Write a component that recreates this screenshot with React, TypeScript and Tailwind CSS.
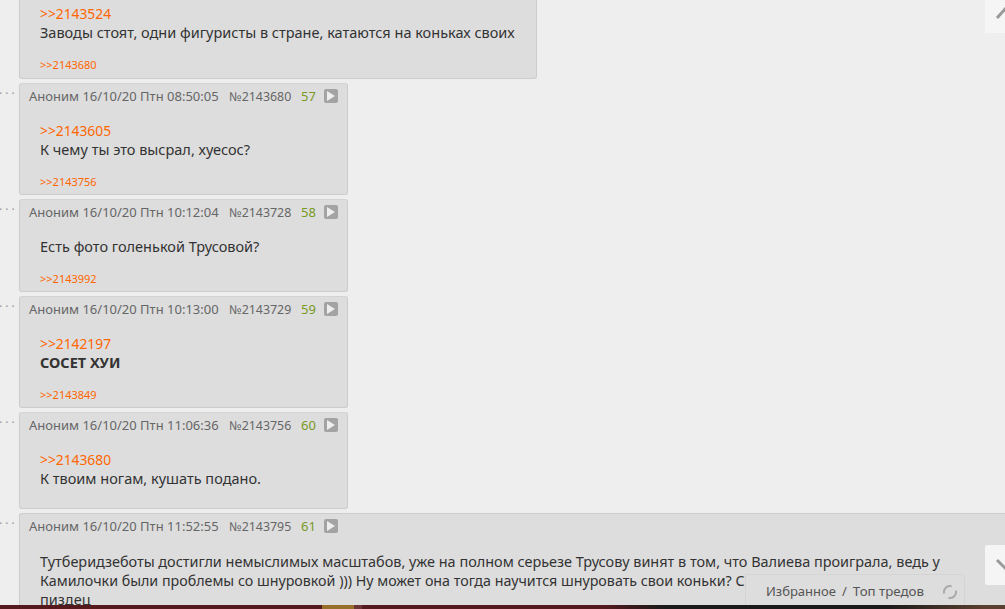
const posts = [
	{
		head: "",
		reply: ">>2143524",
		lines: ["Заводы стоят, одни фигуристы в стране, катаются на коньках своих"],
		backlink: ">>2143680",
		box: "w-[518px] h-[100px] -mt-[21px] pt-[12px]",
	},
	{
		head: "08:50:05",
		id: "2143680",
		n: "57",
		reply: ">>2143605",
		lines: ["К чему ты это высрал, хуесос?"],
		backlink: ">>2143756",
		box: "w-[329px] h-[112px]",
	},
	{
		head: "10:12:04",
		id: "2143728",
		n: "58",
		lines: ["Есть фото голенькой Трусовой?"],
		backlink: ">>2143992",
		box: "w-[329px] h-[93px]",
	},
	{
		head: "10:13:00",
		id: "2143729",
		n: "59",
		reply: ">>2142197",
		bold: true,
		lines: ["СОСЕТ ХУИ"],
		backlink: ">>2143849",
		box: "w-[329px] h-[112px]",
	},
	{
		head: "11:06:36",
		id: "2143756",
		n: "60",
		reply: ">>2143680",
		lines: ["К твоим ногам, кушать подано."],
		box: "w-[329px] h-[97px]",
	},
];

function PostHead({ time, id, n }: { time: string; id: string; n: string }) {
	return (
		<div className="flex items-center h-[24px] text-[13px] text-[#666666] whitespace-nowrap">
			<span className="w-[191px]">Аноним 16/10/20 Птн {time}</span>
			<span className="ml-[9px] w-[63px] text-[12.4px]">№{id}</span>
			<span className="ml-[9px] text-[#789922] w-[14px]">{n}</span>
			<span className="ml-[9px] -mt-[2px] w-[14px] h-[14px] rounded-[2px] bg-[#a3a3a3] flex items-center justify-center">
				<svg width="8" height="10" viewBox="0 0 8 10">
					<path d="M0 0 L8 5 L0 10 Z" fill="#eeeeee" />
				</svg>
			</span>
		</div>
	);
}

function Dots() {
	return (
		<div className="w-[19px] text-[#999999] text-[12px] leading-[14px] tracking-[3px] pt-[4px] -ml-[1px] mr-[1px]">
			···
		</div>
	);
}

export default function App() {
	return (
		<div
			className="relative w-[1005px] h-[609px] overflow-hidden bg-[#eeeeee] text-[#333333] text-[14.5px]"
			style={{ fontFamily: '"Noto Sans", sans-serif' }}
		>
			<div className="flex flex-col gap-[4px]">
				{posts.map((p) => (
					<div key={p.reply ?? p.id} className="flex">
						{p.head ? <Dots /> : <div className="w-[19px]" />}
						<div
							className={`${p.box} shrink-0 bg-[#dddddd] border border-[#cccccc] border-t-[#d4d4d4] rounded-[3px] px-[9px] pt-[1px]`}
						>
							{p.head && <PostHead time={p.head} id={p.id!} n={p.n!} />}
							<div className="pl-[11px] pt-[12px] leading-[19px]">
								{p.reply && <div className="text-[#ff6600] text-[13.8px]">{p.reply}</div>}
								{p.lines.map((l) => (
									<div key={l} className={p.bold ? "font-bold" : ""}>
										{l}
									</div>
								))}
								{p.backlink && (
									<div className="text-[#ff6600] text-[11px] mt-[16px] leading-[14px]">
										{p.backlink}
									</div>
								)}
							</div>
						</div>
					</div>
				))}

				<div className="flex">
					<Dots />
					<div className="flex-1 h-[120px] bg-[#dddddd] border-t border-l border-[#cccccc] rounded-tl-[3px] px-[9px] pt-[1px]">
						<PostHead time="11:52:55" id="2143795" n="61" />
						<div className="pl-[11px] pt-[13px] leading-[19px] whitespace-nowrap">
							<div className="text-[14.45px]">
								Тутберидзеботы достигли немыслимых масштабов, уже на полном серьезе Трусову винят в том, что Валиева проиграла, ведь у
							</div>
							<div className="text-[14.25px]">
								Камилочки были проблемы со шнуровкой ))) Ну может она тогда научится шнуровать свои коньки? Сколько можно уже,
							</div>
							<div>пиздец</div>
						</div>
					</div>
				</div>
			</div>

			<div className="absolute right-0 top-0 w-[20px] h-[33px] bg-[#f5f5f5] overflow-hidden">
				<svg width="20" height="33" viewBox="0 0 20 33">
					<path d="M12 18 L21 8" stroke="#999999" strokeWidth="3" fill="none" />
				</svg>
			</div>
			<div className="absolute right-0 top-[545px] w-[20px] h-[40px] bg-[#f5f5f5] rounded-l-[2px] overflow-hidden">
				<svg width="20" height="40" viewBox="0 0 20 40">
					<path d="M12 15 L22 25" stroke="#999999" strokeWidth="3" fill="none" />
				</svg>
			</div>

			<div className="absolute left-[745px] top-[574px] w-[220px] h-[35px] bg-[#dddddd] border border-[#d4d4d4] rounded-t-[3px] flex items-start pt-[7px] pl-[20px] text-[13px] text-[#555555] whitespace-nowrap">
				<span>Избранное</span>
				<span className="mx-[6px]">/</span>
				<span className="text-[13.3px]">Топ тредов</span>
				<svg className="ml-auto mr-[7px] mt-[3px]" width="14" height="14" viewBox="0 0 14 14" fill="none">
					<path d="M8.5 1.2 A6 6 0 0 0 1.2 8.5" stroke="#aaaaaa" strokeWidth="2" />
					<path d="M12.8 5.5 A6 6 0 0 1 5.5 12.8" stroke="#aaaaaa" strokeWidth="2" />
				</svg>
			</div>

			<div className="absolute left-0 bottom-0 w-full h-[4px] bg-[linear-gradient(to_right,#551a1e_0%,#551a1e_60%,#1a1a1a_66%,#1a1a1a_88%,#5a4030_98%)] flex">
				<div className="ml-[322px] w-[32px] bg-[#96702a]" />
				<div className="w-[8px] bg-[#6b3538]" />
			</div>
		</div>
	);
}
